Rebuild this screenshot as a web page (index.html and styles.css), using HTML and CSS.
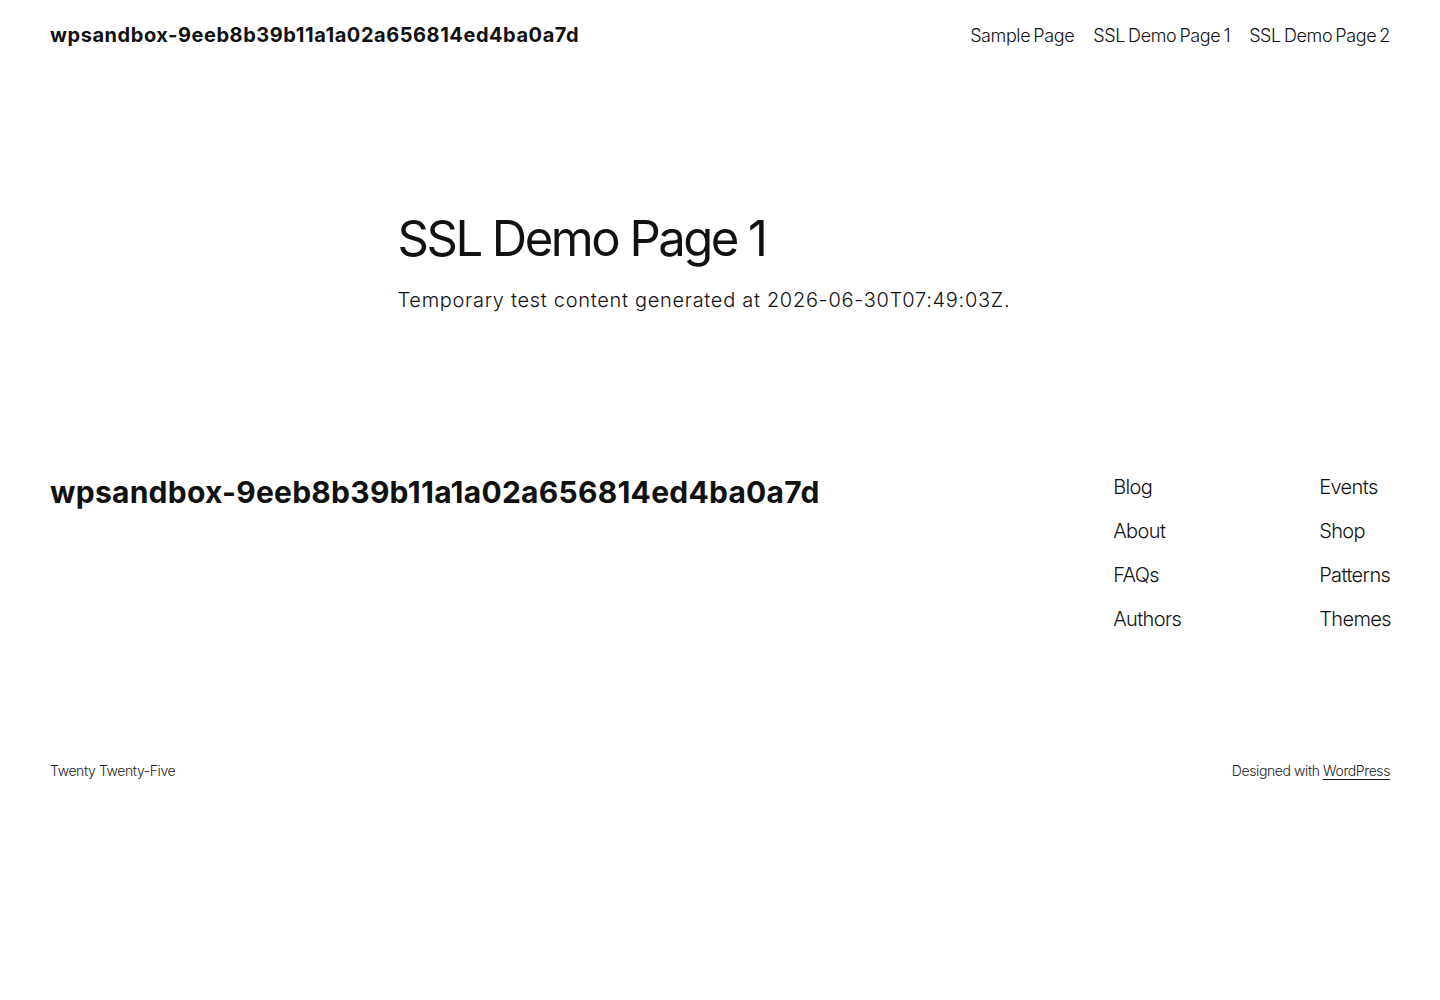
FILE: index.html
```html
<!DOCTYPE html>
<html lang="en">
<head>
<meta charset="utf-8">
<title>SSL Demo Page 1 – wpsandbox-9eeb8b39b11a1a02a656814ed4ba0a7d</title>
<link rel="stylesheet" href="styles.css">
</head>
<body>

<header class="site-header">
  <p class="site-title"><a href="#">wpsandbox-9eeb8b39b11a1a02a656814ed4ba0a7d</a></p>
  <nav class="main-nav">
    <a href="#">Sample Page</a>
    <a href="#">SSL Demo Page 1</a>
    <a href="#">SSL Demo Page 2</a>
  </nav>
</header>

<main class="page">
  <h1 class="page-title">SSL Demo Page 1</h1>
  <p class="page-text">Temporary test content generated at 2026-06-30T07:49:03Z.</p>
</main>

<footer class="site-footer">
  <div class="footer-top">
    <p class="footer-title"><a href="#">wpsandbox-9eeb8b39b11a1a02a656814ed4ba0a7d</a></p>
    <div class="footer-links">
      <nav class="footer-col">
        <a href="#">Blog</a>
        <a href="#">About</a>
        <a href="#">FAQs</a>
        <a href="#">Authors</a>
      </nav>
      <nav class="footer-col">
        <a href="#">Events</a>
        <a href="#">Shop</a>
        <a href="#">Patterns</a>
        <a href="#">Themes</a>
      </nav>
    </div>
  </div>
  <div class="footer-bottom">
    <p>Twenty Twenty-Five</p>
    <p>Designed with <a href="#" class="credit">WordPress</a></p>
  </div>
</footer>

</body>
</html>
```

FILE: styles.css
```css
body {
    margin: 0;
    background: #ffffff;
    color: #111111;
    font-family: Inter, "Noto Sans", sans-serif;
    font-weight: 300;
    font-size: 20px;
    letter-spacing: -0.1px;
}
a {
    color: inherit;
    text-decoration: none;
}
p {
    margin: 0;
}

/* header */
.site-header {
    display: flex;
    justify-content: space-between;
    align-items: center;
    height: 70px;
    padding: 0 50px;
}
.site-title {
    font-size: 20px;
    font-weight: 700;
    letter-spacing: 0.55px;
}
.main-nav {
    display: flex;
    gap: 19px;
    font-size: 18px;
    letter-spacing: -0.4px;
    word-spacing: -1.5px;
}

/* content */
.page {
    width: 645px;
    margin: 0 auto;
    padding: 142px 0 150px;
}
.page-title {
    margin: 0;
    font-size: 49px;
    font-weight: 400;
    letter-spacing: -2.5px;
    line-height: 1.1;
}
.page-text {
    margin-top: 20px;
    line-height: 1.4;
    letter-spacing: 0.7px;
}

/* footer */
.site-footer {
    padding: 0 50px;
}
.footer-top {
    display: flex;
    justify-content: space-between;
    align-items: flex-start;
    padding-top: 8px;
}
.footer-title {
    font-size: 30px;
    font-weight: 700;
    letter-spacing: 0.25px;
    padding-top: 2px;
}
.footer-links {
    display: grid;
    grid-template-columns: 206px auto;
    padding-top: 1px;
    margin-right: -1px;
}
.footer-col {
    display: flex;
    flex-direction: column;
    gap: 16px;
    line-height: 28px;
    letter-spacing: -0.6px;
}
.footer-bottom {
    display: flex;
    justify-content: space-between;
    margin-top: 129px;
    font-size: 14px;
    letter-spacing: -0.4px;
    color: #222222;
}
.footer-bottom a.credit {
    display: inline-block;
    line-height: 16px;
    border-bottom: 1.5px solid #111111;
}
```
